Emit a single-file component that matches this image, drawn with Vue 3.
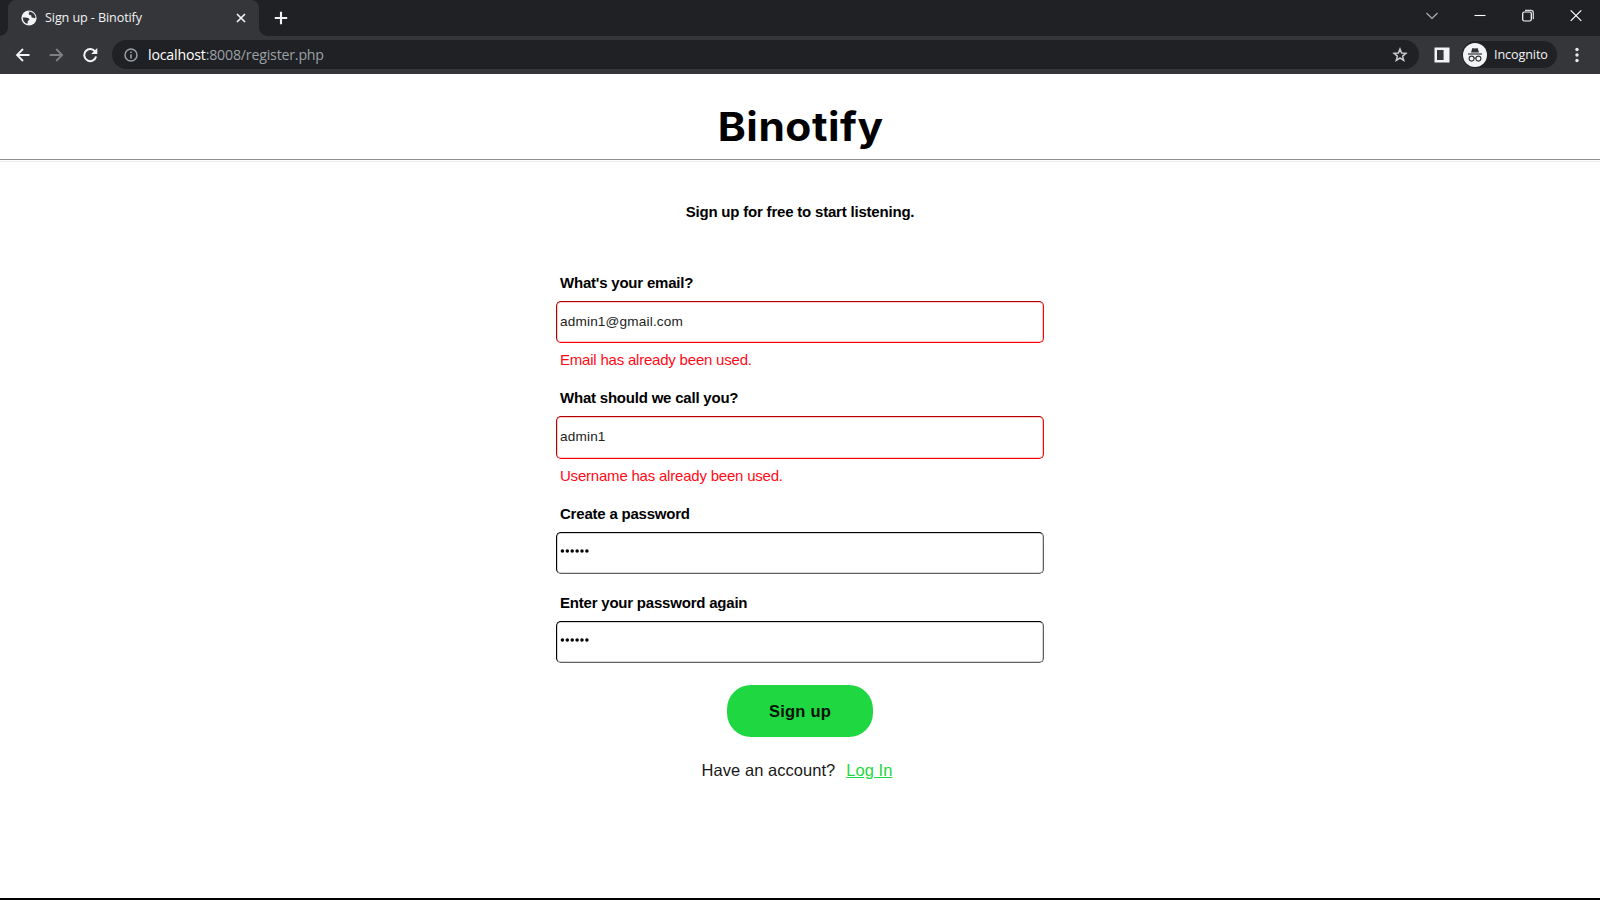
<script setup>
const fields = [
  { id: 'email', label: "What's your email?", value: 'admin1@gmail.com', error: 'Email has already been used.' },
  { id: 'name', label: 'What should we call you?', value: 'admin1', error: 'Username has already been used.' },
  { id: 'pass', label: 'Create a password', dots: 6 },
  { id: 'again', label: 'Enter your password again', dots: 6 },
]
</script>

<template>
  <div class="window">
    <div class="tabstrip">
      <div class="tab">
        <svg class="globe" width="16" height="16" viewBox="0 0 16 16">
          <circle cx="8" cy="8" r="7.6" fill="#f1f3f4" />
          <path d="M6.2 2.2 8.6 1.8 7.6 3.8 8.4 5 10.2 5.2 10.6 7.4 13.4 8 14.2 8.6 14.4 6.2 12.9 3.8 10.8 2.2 8.6 1.6ZM1.7 7.4 5 7.4 7.6 8.2 8.6 9.8 6.8 11 6.6 13.8 4.6 13.2 2.5 11Z" fill="#35363a" />
        </svg>
        <span class="tab-title">Sign up - Binotify</span>
        <svg class="tab-close" width="10" height="10" viewBox="0 0 10 10"><path d="M1 1 9 9M9 1 1 9" stroke="#f1f3f4" stroke-width="1.7" /></svg>
      </div>
      <svg class="plus" width="14" height="14" viewBox="0 0 14 14"><path d="M7 .8V13.2M.8 7H13.2" stroke="#f1f3f4" stroke-width="2.1" /></svg>
      <div class="controls">
        <svg width="14" height="14" viewBox="0 0 14 14"><path d="M1.5 4 7 9.5 12.5 4" fill="none" stroke="#b5b6b8" stroke-width="1.1" /></svg>
        <svg width="14" height="14" viewBox="0 0 14 14"><path d="M1.5 6.5H12.5" stroke="#fff" stroke-width="1.1" /></svg>
        <svg width="14" height="14" viewBox="0 0 14 14"><rect x="1.7" y="3" width="8.6" height="9" rx="1.8" fill="none" stroke="#fff" stroke-width="1.2" /><path d="M4 1.4H10Q12.3 1.4 12.3 3.7V10.2" fill="none" stroke="#ddd" stroke-width="1.2" /></svg>
        <svg width="14" height="14" viewBox="0 0 14 14"><path d="M1.7 1.3 12.3 11.9M12.3 1.3 1.7 11.9" stroke="#fff" stroke-width="1.2" /></svg>
      </div>
    </div>

    <div class="toolbar">
      <svg class="nav" width="16" height="16" viewBox="0 0 16 16"><path d="M14.5 8H2M8 2 2 8 8 14" fill="none" stroke="#f1f3f4" stroke-width="1.8" /></svg>
      <svg class="nav" width="16" height="16" viewBox="0 0 16 16"><path d="M.7 8H13.2M7.2 2 13.2 8 7.2 14" fill="none" stroke="#7d7e81" stroke-width="1.8" /></svg>
      <svg class="nav" width="16" height="16" viewBox="0 0 16 16"><path d="M12.3 4.8A6 6 0 1 0 13.1 9.6" fill="none" stroke="#f1f3f4" stroke-width="2" /><path d="M14.3 1V7H8.2Z" fill="#f1f3f4" /></svg>
      <div class="address">
        <svg width="14" height="14" viewBox="0 0 14 14"><circle cx="7" cy="7" r="6" fill="none" stroke="#9aa0a6" stroke-width="1.5" /><path d="M7 6.2V10.4M7 3.5V5.1" stroke="#9aa0a6" stroke-width="1.6" /></svg>
        <span class="url"><b>localhost</b>:8008/register.php</span>
        <svg class="star" width="16" height="16" viewBox="0 0 16 16"><path d="M8 2 9.6 6 13.9 6.3 10.6 9.1 11.7 13.3 8 11 4.3 13.3 5.4 9.1 2.1 6.3 6.4 6Z" fill="none" stroke="#c8cacc" stroke-width="1.5" /></svg>
      </div>
      <svg class="panel" width="16" height="16" viewBox="0 0 16 16"><path fill-rule="evenodd" d="M.5 .5H15.5V15.5H.5ZM3 3V13H9.6V3Z" fill="#f1f3f4" /></svg>
      <div class="profile">
        <svg width="24" height="24" viewBox="0 0 24 24">
          <circle cx="12" cy="12" r="12" fill="#f1f3f4" />
          <path d="M8 9.6 9.2 5.6Q9.5 4.9 10.3 5.2L12 5.6 13.7 5.2Q14.5 4.9 14.8 5.6L16 9.6Z" fill="#303236" />
          <path d="M5 11H19" stroke="#303236" stroke-width="1.2" />
          <circle cx="8.6" cy="15.6" r="2.5" fill="none" stroke="#303236" stroke-width="1.1" />
          <circle cx="15.4" cy="15.6" r="2.5" fill="none" stroke="#303236" stroke-width="1.1" />
          <path d="M11 15.3Q12 14.7 13 15.3" fill="none" stroke="#303236" />
        </svg>
        <span>Incognito</span>
      </div>
      <svg class="more" width="4" height="16" viewBox="0 0 4 16" fill="#e8eaed"><circle cx="2" cy="2.5" r="1.7" /><circle cx="2" cy="8" r="1.7" /><circle cx="2" cy="13.5" r="1.7" /></svg>
    </div>

    <main class="page">
      <header class="brand"><span>Binotify</span></header>
      <h1>Sign up for free to start listening.</h1>
      <form @submit.prevent>
        <div v-for="f in fields" :key="f.id" class="field" :class="[f.id, { invalid: f.error }]">
          <label>{{ f.label }}</label>
          <div class="input">
            <span v-if="f.value">{{ f.value }}</span>
            <svg v-else class="dots" width="32" height="4" viewBox="0 0 32 4">
              <circle v-for="n in f.dots" :key="n" :cx="2.4 + (n - 1) * 4.9" cy="2" r="1.75" />
            </svg>
          </div>
          <p v-if="f.error" class="error">{{ f.error }}</p>
        </div>
        <button type="submit">Sign up</button>
      </form>
      <p class="login"><span>Have an account?</span><a>Log In</a></p>
    </main>
  </div>
</template>

<style>
body { margin: 0; overflow: hidden; }
</style>

<style scoped>
* { box-sizing: border-box; }
svg { display: block; flex: none; }
.window {
  width: 1600px; height: 900px; display: flex; flex-direction: column;
  background: #fff; border-bottom: 2px solid #000;
  font-family: "Liberation Sans", Arial, sans-serif; color: #000; overflow: hidden;
}
.tabstrip { height: 36px; background: #202124; display: flex; align-items: flex-start; padding-left: 8px; flex: none; }
.tab {
  position: relative; width: 251px; height: 36px; padding: 0 13px; background: #35363a;
  border-radius: 8px 8px 0 0; display: flex; align-items: center;
}
.tab::before, .tab::after { content: ""; position: absolute; bottom: 0; width: 8px; height: 8px; }
.tab::before { left: -8px; background: radial-gradient(circle at 0 0, transparent 7.5px, #35363a 8px); }
.tab::after { right: -8px; background: radial-gradient(circle at 100% 0, transparent 7.5px, #35363a 8px); }
.tab-title { margin-left: 8px; font: 12.6px/18px "Open Sans", sans-serif; letter-spacing: -.1px; color: #f1f3f4; white-space: nowrap; }
.tab-close { margin-left: auto; }
.plus { margin: 11px 0 0 15px; }
.controls { margin: 9px 17px 0 auto; display: flex; gap: 34px; }

.toolbar { height: 38px; flex: none; background: #35363a; display: flex; align-items: center; padding: 0 21px 1px 15px; }
.nav { margin-right: 18px; }
.nav:nth-child(3) { margin-right: 13px; }
.address {
  width: 1307px; height: 29px; border-radius: 15px; background: #202124;
  display: flex; align-items: center; padding: 0 11px 0 12px;
}
.url { margin-left: 10px; font: 14.2px/20px "Open Sans", sans-serif; letter-spacing: -.2px; color: #9aa0a6; white-space: nowrap; }
.url b { font-weight: 400; color: #fff; }
.star { margin-left: auto; }
.panel { margin-left: 15px; }
.profile {
  margin-left: 12px; width: 95px; height: 27px; border-radius: 14px; background: #202124;
  display: flex; align-items: center; padding-left: 1px;
  font: 12.6px/18px "Open Sans", sans-serif; letter-spacing: -.1px; color: #f1f3f4;
}
.profile span { margin-left: 7px; }
.more { margin-left: auto; }

.page { flex: 1; display: flex; flex-direction: column; align-items: center; }
.brand {
  align-self: stretch; height: 88px; padding-top: 28px; text-align: center;
  border-bottom: 1px solid #ececec;
  background: linear-gradient(#8f8f8f, #8f8f8f) 0 85px / 100% 1px no-repeat;
}
.brand span { display: inline-block; font: 700 39.5px/50px Inter, sans-serif; letter-spacing: .5px; transform: translateX(.5px) scaleX(1.075); }
h1 { margin: 40px 0 0; font-size: 15px; line-height: 20px; font-weight: 700; letter-spacing: -.2px; white-space: nowrap; }
form { width: 488px; margin-top: 51px; display: flex; flex-direction: column; align-items: stretch; }
label { display: block; height: 28px; padding-left: 4px; font-size: 15px; line-height: 20px; font-weight: 700; letter-spacing: -.21px; }
.input {
  height: 42px; padding-left: 4px; border-radius: 5px; display: flex; align-items: center;
  border: 1px solid; border-color: #000 #606060 #606060 #000;
  box-shadow: inset 0 0 0 .5px #0005;
  font-size: 13.6px; letter-spacing: .17px; line-height: 18px; color: #222;
}
.input span { margin-left: -1px; }
.invalid .input { border-color: #b00000 #f00 #f00 #b00000; box-shadow: inset 0 0 0 .5px #f006; }
.name .input { height: 43px; padding-bottom: 1px; }
.error { margin: 7px 0 0; padding-left: 4px; font-size: 15px; line-height: 20px; letter-spacing: -.21px; color: #ff0a18; }
.email { height: 115px; }
.name { height: 116px; }
.pass { height: 89px; }
.again { height: 70px; }
.dots { margin: -4px 0 0 -1px; }
button {
  align-self: center; width: 146px; height: 52px; margin-top: 22px; border: 0; border-radius: 24px; background: #1fd740;
  font: 700 16.5px/20px "Liberation Sans", Arial, sans-serif; letter-spacing: .2px; color: #061106;
}
.login { margin: 23px 0 0; display: flex; gap: 11px; font-size: 16.5px; letter-spacing: .04px; line-height: 20px; color: #181818; transform: translateX(-3px); }
.login a { color: #1fd740; text-decoration: underline; }
</style>
